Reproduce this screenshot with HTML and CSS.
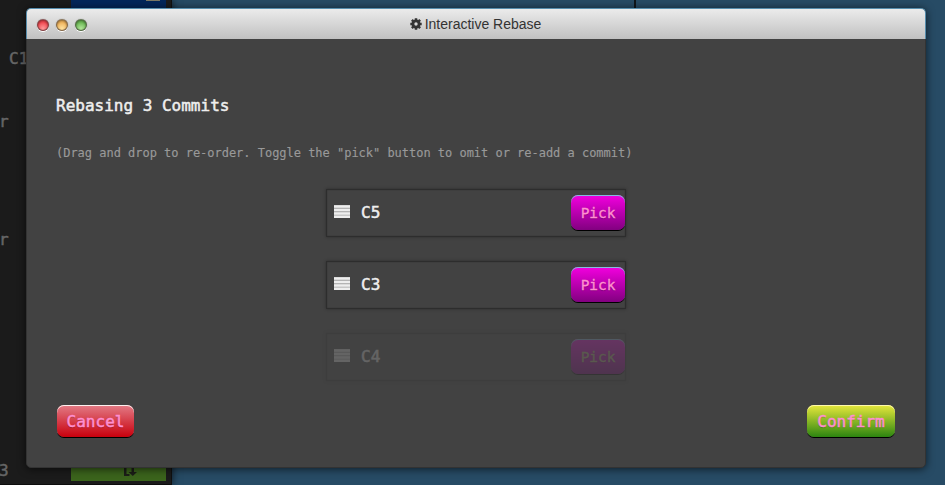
FILE: index.html
```
<!DOCTYPE html>
<html lang="en">
<head>
<meta charset="utf-8">
<title>Interactive Rebase</title>
<link rel="stylesheet" href="styles.css">
</head>
<body>
<div class="backdrop" aria-hidden="true">
  <div class="terminal">
    <div class="terminal-text">
      <p class="c1">C1</p><p class="r1">r</p><p class="r2">r</p><p class="c3">3</p>
    </div>
    <div class="terminal-status">
      <div class="status-top"><i></i></div>
      <div class="status-bottom">
        <svg width="15" height="10" viewBox="0 0 15 10"><path d="M1 0h2.5v6h3v2H1zM8.5 0h2.500v4h3l-4.200 4-4.300-4h3z" fill="#1c1e18"/></svg>
      </div>
    </div>
  </div>
  <div class="canvas"></div>
</div>
<section class="window">
  <header class="titlebar">
    <div class="lights"><span class="light red"></span><span class="light yellow"></span><span class="light green"></span></div>
    <div class="title">
      <svg width="12" height="12" viewBox="0 0 12 12"><circle cx="6" cy="6" r="3.1" fill="none" stroke="#333" stroke-width="2.8"/><path d="M6 .3v2M6 9.7v2M.3 6h2M9.700 6h2M1.900 1.900l1.400 1.400M8.700 8.700l1.400 1.400M10.100 1.900L8.700 3.300M3.300 8.700l-1.400 1.400" stroke="#333" stroke-width="2.5"/></svg>
      <span>Interactive Rebase</span>
    </div>
  </header>
  <main class="content">
    <h1>Rebasing 3 Commits</h1>
    <p class="hint">(Drag and drop to re-order. Toggle the "pick" button to omit or re-add a commit)</p>
    <ul class="commits">
      <li><svg class="grip" viewBox="0 0 16 13"><path d="M0 0h16v13H0z" fill="#a0a0a0"/><path d="M0 1.500h16M0 5h16M0 8.500h16M0 11.750h16" stroke="#eee" stroke-width="2.600"/></svg><span class="name">C5</span><button class="btn pick">Pick</button></li>
      <li><svg class="grip" viewBox="0 0 16 13"><path d="M0 0h16v13H0z" fill="#a0a0a0"/><path d="M0 1.500h16M0 5h16M0 8.500h16M0 11.750h16" stroke="#eee" stroke-width="2.600"/></svg><span class="name">C3</span><button class="btn pick">Pick</button></li>
      <li class="omitted"><svg class="grip" viewBox="0 0 16 13"><path d="M0 0h16v13H0z" fill="#a0a0a0"/><path d="M0 1.500h16M0 5h16M0 8.500h16M0 11.750h16" stroke="#eee" stroke-width="2.600"/></svg><span class="name">C4</span><button class="btn pick">Pick</button></li>
    </ul>
    <footer class="actions"><button class="btn cancel">Cancel</button><button class="btn confirm">Confirm</button></footer>
  </main>
</section>
</body>
</html>
```
FILE: styles.css
```
* { box-sizing: border-box; }
body { margin: 0; width: 945px; height: 485px; overflow: hidden; position: relative; background: #274b65; font-family: "DejaVu Sans Mono", monospace; }
h1, p, ul { margin: 0; padding: 0; font-weight: normal; }
.backdrop { display: flex; height: 485px; }
.terminal { width: 172px; display: flex; background: #1b1b1b; border-bottom: 1px solid #0d0d0d; box-shadow: 0 0 8px rgba(0,0,0,.7); border-right: 1px solid #101010; }
.terminal-text { width: 71px; color: #666; font-size: 16px; line-height: 20px; -webkit-text-stroke: .5px #666; }
.c1 { padding: 49px 0 0 9px; }
.r1 { padding-top: 43px; }
.r2 { padding-top: 98px; }
.c3 { padding-top: 211px; }
.terminal-text .r1, .terminal-text .r2, .terminal-text .c3 { margin-left: -1px; }
.terminal-status { width: 95px; height: 481px; display: flex; flex-direction: column; justify-content: space-between; }
.status-top { height: 30px; background: #03265a; display: flex; justify-content: flex-end; padding-right: 6px; }
.status-top i { width: 14px; height: 1px; background: #7d7965; }
.status-bottom { height: 30px; background: #3b641c; padding: 17px 0 0 52px; display: flex; }
.canvas { width: 464px; height: 300px; border-right: 2px solid #10161a; }

.window { position: absolute; left: 26px; top: 8px; width: 900px; height: 460px; border: 1px solid #333; border-radius: 5px; background: #424242; box-shadow: 0 1px 8px rgba(0,0,0,.65); display: flex; flex-direction: column; }
.titlebar { margin: -1px -1px 0; height: 31px; flex: none; border: 1px solid #568dad; border-bottom: 0; border-radius: 5px 5px 0 0; background: linear-gradient(#ebebeb, #c1c1c1); display: grid; grid-template-columns: 1fr auto 1fr; align-items: center; }
.lights { display: flex; gap: 7px; padding: 1px 0 0 10px; }
.light { width: 12px; height: 12px; border-radius: 50%; border: 1px solid rgba(60,50,50,.6); box-shadow: 0 1px 0 #fff, 0 0 1px rgba(0,0,0,.5), inset 0 1px 2px rgba(0,0,0,.4); }
.red { background: radial-gradient(circle at 50% 85%, #ff9a9a, #f1474f 65%); }
.yellow { background: radial-gradient(circle at 50% 85%, #ffe2a0, #efb25a 65%); }
.green { background: radial-gradient(circle at 50% 85%, #b2e69a, #6bb854 65%); }
.title { display: flex; align-items: center; gap: 3px; margin-right: 1px; color: #333; font: 14px/18px "Liberation Sans", Arial, sans-serif; }

.content { padding: 57px 30px 0 29px; flex: 1; }
h1 { height: 20px; color: #eee; font-size: 16px; line-height: 20px; -webkit-text-stroke: .5px #eee; }
.hint { margin-top: 29px; color: #999; font-size: 12px; line-height: 16px; letter-spacing: -.02px; -webkit-text-stroke: .15px #999; }
.commits { width: 300px; margin: 28px 0 0 270px; list-style: none; display: grid; gap: 24px; }
.commits li { height: 48px; border: 1px solid #2d2d2d; box-shadow: 0 0 3px rgba(0,0,0,.35), inset 0 0 1px rgba(0,0,0,.5); display: flex; align-items: center; padding-left: 7px; }
.commits .omitted { opacity: .2; }
.grip { width: 16px; height: 13px; margin-top: -3px; }
.name { margin: 0 auto 0 11px; color: #eee; font-size: 16px; line-height: 20px; -webkit-text-stroke: .5px #eee; }
.btn { display: block; margin: 0; padding: 0; border: 0; border-radius: 7px; font-family: inherit; color: #ff8fd0; text-shadow: 0 1px 1px rgba(0,0,0,.25); }
.pick { width: 54px; height: 35px; margin-top: -1px; font-size: 14.4px; background: linear-gradient(#f300df, #820080); box-shadow: inset 0 1px 0 #88b8e0, 0 1px 0 #000; -webkit-text-stroke: .35px #ff8fd0; }
.omitted .pick { color: #b9b080; -webkit-text-stroke-color: #b9b080; }
.actions { margin-top: 24px; display: flex; justify-content: space-between; }
.actions .btn { height: 32px; font-size: 16px; -webkit-text-stroke: .5px #ff8fd0; }
.actions .cancel { width: 77px; margin-left: 1px; background: linear-gradient(#e37b86, #c8000d); box-shadow: inset 0 1px 0 #fff0ef, 0 1px 0 #000; }
.actions .confirm { width: 88px; background: linear-gradient(#e7e83c, #2c8510); box-shadow: inset 0 1px 0 #fff9ab, 0 1px 0 #000; }
```
